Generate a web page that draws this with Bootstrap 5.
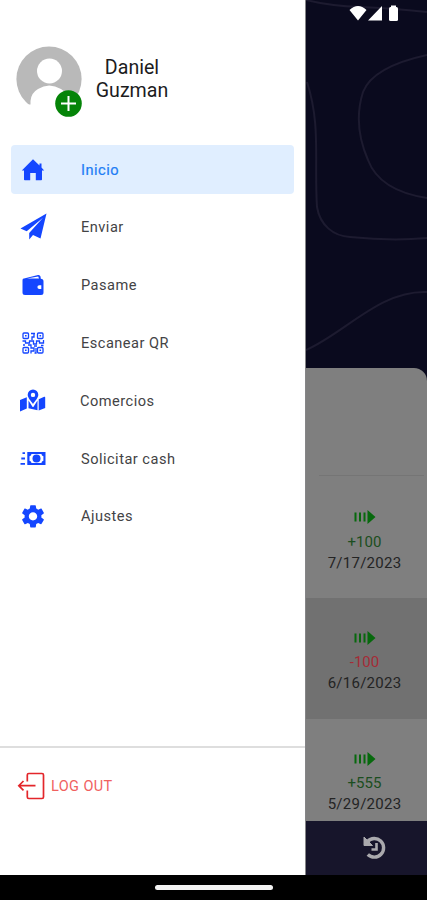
<!DOCTYPE html>
<html lang="es">
<head>
<meta charset="utf-8">
<meta name="viewport" content="width=device-width, initial-scale=1">
<title>Menú</title>
<link href="https://cdn.jsdelivr.net/npm/bootstrap@5.3.0/dist/css/bootstrap.min.css" rel="stylesheet">
<style>
body{font-family:Roboto,"Liberation Sans",sans-serif;background:#000;color:#1c1c1e}
.screen{width:427px;height:900px}
.stage{height:875px}
.drawer{width:305px;border-right:0}
.edge{width:1px;background:#858587}
.profile{height:145px;padding:46px 0 0 16px}
.avatar{width:66px;height:71px}
.plus-dot{right:0;bottom:0;width:27px;height:27px}
.person-name{font-size:19.6px;line-height:23px;margin:10px 0 0 13px;width:74px}
.menu{padding:0 11px;gap:8.8px}
.menu-link{height:49px;border-radius:4px;color:#434345;font-size:14.6px;letter-spacing:.48px;text-decoration:none;padding-left:8px}
.menu-link svg{width:28px;height:28px;fill:#1446ff;color:#1446ff;margin-right:34px;flex:none}
.menu-link span{padding-top:2px}
.menu-link.current{background:#e0eeff;color:#1d7cf5}
.menu-link.current span{-webkit-text-stroke:.2px}
.menu-link.shifted span{margin-left:-1px}
.signout{height:129px;border-top:2px solid #dedede;padding:24px 0 0 17px;color:#f0615f;font-size:14.5px;line-height:29px;letter-spacing:.4px}
.signout svg{margin-right:5px}
.behind{width:121px;background:#0a0a1e}
.waves{height:368px}
.sheet{background:#7f7f7f;border-top-right-radius:13px;height:453px}
.summary{height:108px;margin-right:3px}
.summary::after{content:"";display:block;height:1px;background:#757575;margin-left:13px}
.movement{height:122px;padding-top:33px;font-size:15px;line-height:21px;color:#242424;padding-right:4px}
.movement + .movement{height:120.5px;padding-top:32px}
.movement svg{width:22px;height:16px;margin-bottom:6.5px;fill:#07690d}
.movement + .movement svg{margin-bottom:6px}
.movement.alt{background:#717171}
.gain{color:#1b4e20}.loss{color:#a52b36}
.date-text{letter-spacing:.25px}
.tabs{height:54px;background:#17152b;padding-left:16px}
.gesture{height:25px;background:#000}
.pill{width:118px;height:5px;background:#f3f3f3;border-radius:3px}
</style>
<script src="https://cdn.jsdelivr.net/npm/bootstrap@5.3.0/dist/js/bootstrap.bundle.min.js"></script>
</head>
<body class="m-0 overflow-hidden">
<div class="screen d-flex flex-column">
<div class="stage d-flex">
<aside class="drawer bg-white d-flex flex-column">
  <header class="profile d-flex align-items-start">
    <div class="avatar position-relative flex-shrink-0">
      <svg class="d-block" width="66" height="66" viewBox="0 0 66 66"><defs><clipPath id="disc"><path d="M0 0H66V58.500H0Z"/></clipPath></defs><circle cx="33" cy="33" r="32.6" fill="#b9b9b9" clip-path="url(#disc)"/><circle cx="33.500" cy="25" r="12.500" fill="#fff"/><path d="M14.500 66V55Q15 47 22 43Q33 36 45 43Q52 47 52.500 55V66Z" fill="#fff"/></svg>
      <svg class="plus-dot position-absolute" viewBox="0 0 27 27"><circle cx="13.500" cy="13.500" r="13.300" fill="#058408"/><path d="M13.500 6V21M6 13.500H21" stroke="#fff" stroke-width="2"/></svg>
    </div>
    <div class="person-name text-center">Daniel Guzman</div>
  </header>
  <nav class="menu d-flex flex-column flex-grow-1">
    <a class="menu-link current d-flex align-items-center" href="#"><svg viewBox="0 0 28 28"><path d="M14 3.200 2.800 14.500H5V23.500q0 .8.800.8h5.400V17h5.600v7.300h5.400q.8 0 .8-.8V14.500h2.200L22.500 11.500V7.500H20.500v2Z"/></svg><span>Inicio</span></a>
    <a class="menu-link d-flex align-items-center" href="#"><svg viewBox="0 0 28 28"><path d="M27.500 .5 1.500 15.600 7.700 18.200 24 4.800 10.200 20v6.500L14 22l7.500 3.500Z"/></svg><span>Enviar</span></a>
    <a class="menu-link d-flex align-items-center" href="#"><svg viewBox="0 0 28 28"><path fill-rule="evenodd" d="M4 7.800 19 4q2-.3 2.500 1.500l.3 2.300q2.700 0 2.700 2.700V21.500q0 2.500-2.500 2.500H6q-2.500 0-2.500-2.500V9.500Q3.500 8.500 4 7.800ZM8 7.600H20L19.200 5.600ZM20.300 14.200a1.900 1.900 0 1 0 0 3.800h2v-3.800Z"/></svg><span>Pasame</span></a>
    <a class="menu-link d-flex align-items-center" href="#"><svg viewBox="0 0 28 28"><g fill="none" stroke="currentColor" stroke-width="1.300"><rect x="4" y="4" width="5.500" height="5.500" rx="1"/><rect x="18.500" y="4" width="5.500" height="5.500" rx="1"/><rect x="4" y="18.500" width="5.500" height="5.500" rx="1"/><rect x="18.500" y="18.500" width="5.500" height="5.500" rx="1"/><path d="M12 4.500h4M15 4v4h-2v3M3.500 12h3v2h4v-2h4v3h3v-3h3v2h4v-3M4 16h2M9 16h3v3h3v3h-3v2.500M15 17h3M22 16.500h2.500M15.500 24h1.500v-5"/></g><path d="M6 6h1.600v1.600H6ZM20.500 6h1.600v1.600h-1.600ZM6 20.500h1.600v1.600H6ZM20.500 20.500h1.600v1.600h-1.600Z"/></svg><span>Escanear QR</span></a>
    <a class="menu-link shifted d-flex align-items-center" href="#"><svg viewBox="0 0 28 28"><path fill-rule="evenodd" d="M14 2.500a5.300 5.300 0 0 1 5.300 5.300C19.300 11 16 14 14 17 12 14 8.700 11 8.700 7.800A5.300 5.300 0 0 1 14 2.500Zm0 3.200a2.200 2.200 0 1 0 0 4.400 2.200 2.200 0 0 0 0-4.400Z"/><path d="M1 13 7.800 10.300V21.500L1 24.500Zm8.500 .5L13.300 19.500q.7 1 1.400 0L18.500 13.500v9.800l-9-2Zm10.200-1.200 5.500-2.500q1-.3 1 .7V21L19.700 23.500Z"/></svg><span>Comercios</span></a>
    <a class="menu-link d-flex align-items-center" href="#"><svg viewBox="0 0 28 28"><path fill-rule="evenodd" d="M8.300 8H26.500V21H8.300ZM12.500 10q-.2 2-2 2.200v4.600q1.800.2 2 2.200h9.900q.2-2 2-2.200v-4.600q-1.800-.2-2-2.200Z"/><circle cx="17.500" cy="14.500" r="4"/><path d="M3.500 8.200H6v1.800H3.500ZM2.300 13.600H6v1.800H2.300ZM1.500 19H6v1.800H1.500Z"/></svg><span>Solicitar cash</span></a>
    <a class="menu-link d-flex align-items-center" href="#"><svg viewBox="0 -.3 24 24"><path d="M19.140 12.940c.04-.3.060-.61.060-.94 0-.32-.02-.64-.07-.94l2.030-1.580c.18-.14.230-.41.120-.61l-1.920-3.320c-.12-.22-.37-.29-.59-.22l-2.390.96c-.5-.38-1.030-.7-1.620-.94l-.36-2.540c-.04-.24-.24-.41-.48-.41h-3.840c-.24 0-.43.17-.47.41l-.36 2.540c-.59.24-1.130.57-1.620.94l-2.390-.96c-.22-.08-.47 0-.59.22L2.740 8.870c-.12.21-.08.47.12.61l2.030 1.580c-.05.3-.09.63-.09.94s.02.64.07.94l-2.030 1.580c-.18.14-.23.41-.12.61l1.920 3.320c.12.22.37.29.59.22l2.390-.96c.5.38 1.030.7 1.620.94l.36 2.540c.05.24.24.41.48.41h3.840c.24 0 .44-.17.47-.41l.36-2.540c.59-.24 1.130-.56 1.620-.94l2.390.96c.22.08.47 0 .59-.22l1.920-3.320c.12-.22.070-.47-.12-.61l-2.010-1.580zM12 15.600c-1.980 0-3.600-1.620-3.600-3.600s1.620-3.600 3.600-3.600 3.600 1.620 3.600 3.600-1.620 3.600-3.600 3.600z"/></svg><span>Ajustes</span></a>
  </nav>
  <footer class="signout d-flex align-items-start"><svg width="29" height="29" viewBox="0 0 29 29" fill="none" stroke="#e3262b" stroke-width="1.700"><path d="M10.300 9.500V3q0-1.500 1.500-1.500H25q1.500 0 1.500 1.500V25q0 1.500-1.500 1.500H11.800q-1.500 0-1.500-1.500V18.500M18.500 13.700H2M6.500 9 1.800 13.700 6.500 18.400"/></svg><span>LOG OUT</span></footer>
</aside>
<div class="edge"></div>
<main class="behind d-flex flex-column">
  <svg class="waves d-block" width="121" height="368" viewBox="306 0 121 368"><rect x="306" y="0" width="121" height="368" fill="#0a0a1e"/><g fill="none" stroke="#1d1b30" stroke-width="2"><path d="M306 0Q330 6 360 7T427 12M427 55C395 62 370 74 363 92C356 114 358 137 368 160C377 184 401 194 427 198M307 82C321 125 314 160 317 207C320 225 333 236 350 237C380 240 405 240 427 238M306 350C345 333 380 290 427 292"/></g><g fill="#fff"><path d="M349.500 10q8.500-8 17 0L358 20.500ZM368 20.500H382V6Z"/><rect x="389" y="7" width="9" height="14" rx="1.500"/><path d="M391 5.500h5V8h-5Z"/></g></svg>
  <section class="sheet overflow-hidden">
    <div class="summary d-flex flex-column justify-content-end"></div>
    <div class="movement d-flex flex-column align-items-center"><svg viewBox="0 0 22 16"><path d="M.5 3.500h2v9h-2ZM5 3.500h2v9H5ZM9.500 3.500h2v9h-2ZM13.500 1l8 7L13.500 15Z"/></svg><span class="gain">+100</span><span class="date-text">7/17/2023</span></div>
    <div class="movement alt d-flex flex-column align-items-center"><svg viewBox="0 0 22 16"><path d="M.5 3.500h2v9h-2ZM5 3.500h2v9H5ZM9.500 3.500h2v9h-2ZM13.500 1l8 7L13.500 15Z"/></svg><span class="loss">-100</span><span class="date-text">6/16/2023</span></div>
    <div class="movement d-flex flex-column align-items-center"><svg viewBox="0 0 22 16"><path d="M.5 3.500h2v9h-2ZM5 3.500h2v9H5ZM9.500 3.500h2v9h-2ZM13.500 1l8 7L13.500 15Z"/></svg><span class="gain">+555</span><span class="date-text">5/29/2023</span></div>
  </section>
  <div class="tabs d-flex align-items-center justify-content-center"><svg width="24" height="24" viewBox="0 0 24 24" fill="none" stroke="#aaa9ad"><path d="M4.500 5.500A9.300 9.300 0 1 1 4.800 18.500" stroke-width="3.400"/><path d="M1 1V9.500H9.500Z" fill="#aaa9ad" stroke="#aaa9ad"/><path d="M13.500 7V13.500H8.500" stroke-width="2.600"/></svg></div>
</main>
</div>
<div class="gesture d-flex align-items-center justify-content-center"><div class="pill"></div></div>
</div>
</body>
</html>
